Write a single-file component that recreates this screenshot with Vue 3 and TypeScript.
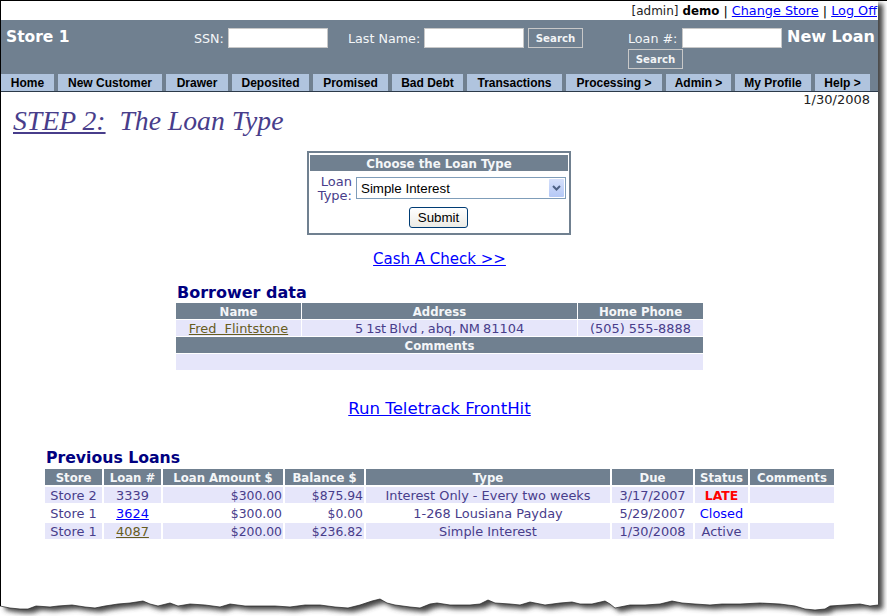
<script setup lang="ts">
const tabs = [
  { label: 'Home', width: 53 },
  { label: 'New Customer', width: 104 },
  { label: 'Drawer', width: 62 },
  { label: 'Deposited', width: 77 },
  { label: 'Promised', width: 75 },
  { label: 'Bad Debt', width: 71 },
  { label: 'Transactions', width: 95 },
  { label: 'Processing >', width: 96 },
  { label: 'Admin >', width: 65 },
  { label: 'My Profile', width: 76 },
  { label: 'Help >', width: 55 },
]

// torn bottom edge of the screenshot paper
const torn = '0,606 10,608 20,609 28,609 36,606 50,607 58,606 72,605 85,607 95,608 105,606 118,604 130,603 143,601 150,604 158,606 170,603 178,606 190,604 205,605 220,607 230,604 245,606 260,606 275,606 290,607 305,605 320,605 335,607 348,608 360,605 372,601 380,599 387,603 395,605 410,607 420,608 430,604 437,603 450,605 470,605 480,604 488,600 495,603 510,604 520,605 530,602 545,605 560,603 572,602 580,604 592,604 605,601 610,604 615,608 630,605 645,605 660,604 672,601 682,603 695,604 710,605 722,604 740,604 760,603 780,604 795,606 805,609 815,610 825,609 830,606 845,605 860,604 870,606 878,605'
const paper = `0,0 878,0 ${torn.split(' ').reverse().join(' ')}`

interface Loan {
  store: string
  no: string
  link?: 'new' | 'seen'
  amount: string
  balance: string
  type: string
  due: string
  status: string
  statusClass?: string
  odd: boolean
}

const loans: Loan[] = [
  { store: 'Store 2', no: '3339', amount: '$300.00', balance: '$875.94', type: 'Interest Only - Every two weeks', due: '3/17/2007', status: 'LATE', statusClass: 'late', odd: true },
  { store: 'Store 1', no: '3624', link: 'new', amount: '$300.00', balance: '$0.00', type: '1-268 Lousiana Payday', due: '5/29/2007', status: 'Closed', statusClass: 'closed', odd: false },
  { store: 'Store 1', no: '4087', link: 'seen', amount: '$200.00', balance: '$236.82', type: 'Simple Interest', due: '1/30/2008', status: 'Active', odd: true },
]
</script>

<template>
  <div class="sheet">
    <svg class="paper" width="887" height="616" viewBox="0 0 887 616">
      <defs>
        <filter id="soft" x="-5%" y="-5%" width="110%" height="110%">
          <feGaussianBlur stdDeviation="2.6" />
        </filter>
      </defs>
      <polygon :points="paper" fill="#444" filter="url(#soft)" transform="translate(5 4)" />
      <polygon :points="paper" fill="#fff" />
      <polyline :points="torn" fill="none" stroke="#222" stroke-width="0.7" />
      <path d="M0 .5H887M.5 0V606" fill="none" stroke="#000" />
    </svg>

    <div class="page">
      <div class="userbar">
        <span class="who">[admin]</span> <b>demo</b> | <a href="#">Change Store</a> | <a href="#">Log Off</a>
      </div>

      <header class="topbar">
        <div class="search-row">
          <strong class="store">Store 1</strong>
          <label class="ssn">SSN: <input type="text" /></label>
          <label class="lastname">Last Name: <input type="text" /></label>
          <button class="search-btn">Search</button>
          <div class="loan-search">
            <label>Loan #: <input type="text" /></label>
            <button class="search-btn">Search</button>
          </div>
          <strong class="newloan">New Loan</strong>
        </div>
        <nav class="tabs">
          <a v-for="t in tabs" :key="t.label" href="#" :style="{ width: t.width + 'px' }">{{ t.label }}</a>
        </nav>
      </header>

      <div class="today">1/30/2008</div>
      <h1 class="step"><u>STEP 2:</u>&nbsp; The Loan Type</h1>

      <form class="typebox" @submit.prevent>
        <div class="typebox-head">Choose the Loan Type</div>
        <div class="typebox-row">
          <label for="ltype">Loan Type:</label>
          <div class="fakeselect" id="ltype">
            <span>Simple Interest</span>
            <i class="arrow">
              <svg width="9" height="6" viewBox="0 0 9 6"><path d="M1 1l3.500 3.500L8 1" fill="none" stroke="#4d6185" stroke-width="2" /></svg>
            </i>
          </div>
        </div>
        <button class="submit">Submit</button>
      </form>

      <p class="biglink cash"><a href="#">Cash A Check &gt;&gt;</a></p>

      <table class="borrower">
        <caption>Borrower data</caption>
        <colgroup><col class="b1" /><col class="b2" /><col class="b3" /></colgroup>
        <tbody>
          <tr><th>Name</th><th>Address</th><th>Home Phone</th></tr>
          <tr class="alt">
            <td><a class="seen" href="#">Fred&nbsp; Flintstone</a></td>
            <td class="addr">5 1st Blvd , abq, NM 81104</td>
            <td>(505) 555-8888</td>
          </tr>
          <tr><th colspan="3">Comments</th></tr>
          <tr class="alt"><td colspan="3">&nbsp;</td></tr>
        </tbody>
      </table>

      <p class="biglink run"><a href="#">Run Teletrack FrontHit</a></p>

      <table class="loans">
        <caption>Previous Loans</caption>
        <colgroup>
          <col class="c1" /><col class="c2" /><col class="c3" /><col class="c4" />
          <col class="c5" /><col class="c6" /><col class="c7" /><col class="c8" />
        </colgroup>
        <thead>
          <tr>
            <th>Store</th><th>Loan #</th><th>Loan Amount $</th><th>Balance $</th>
            <th>Type</th><th>Due</th><th>Status</th><th>Comments</th>
          </tr>
        </thead>
        <tbody>
          <tr v-for="l in loans" :key="l.no" :class="{ alt: l.odd }">
            <td>{{ l.store }}</td>
            <td>
              <a v-if="l.link" href="#" :class="{ seen: l.link === 'seen' }">{{ l.no }}</a>
              <template v-else>{{ l.no }}</template>
            </td>
            <td class="num">{{ l.amount }}</td>
            <td class="num">{{ l.balance }}</td>
            <td>{{ l.type }}</td>
            <td>{{ l.due }}</td>
            <td :class="l.statusClass">{{ l.status }}</td>
            <td></td>
          </tr>
        </tbody>
      </table>
    </div>
  </div>
</template>

<style>
html, body { margin: 0; background: #fff; }
</style>

<style scoped>
.sheet {
  position: relative; width: 887px; height: 616px; overflow: hidden;
  font-family: "DejaVu Sans", Verdana, sans-serif; font-size: 13px; color: #483d8b;
}
.paper { position: absolute; left: 0; top: 0; }
.page { position: relative; width: 877px; margin-left: 1px; padding-top: 1px; }
a { color: #00f; }
a.seen { color: #665c1e; }

.userbar { height: 19px; line-height: 20px; text-align: right; color: #000; font-size: 12.800px; padding-right: 1px; white-space: nowrap; }
.userbar .who { color: #222; font-size: 12px; }
.userbar b { font-size: 11.800px; }

.topbar { background: #708090; height: 71px; display: flex; flex-direction: column; justify-content: space-between; border-bottom: 1px solid #2c3a4a; color: #fff; }
.search-row { display: flex; align-items: flex-start; padding: 8px 0 0 5px; height: 46px; box-sizing: border-box; }
.store, .newloan { font-size: 16px; line-height: 16px; margin-top: 1px; }
.store { width: 188px; font-size: 15.500px; }
.search-row label { white-space: nowrap; font-size: 12.700px; line-height: 22px; color: #f4f6f8; }
.search-row input {
  width: 100px; height: 20px; box-sizing: border-box; margin: 0; padding: 0;
  border: 1px solid #c8c8c8; background: #fff; vertical-align: top;
}
.ssn { width: 154px; }
.lastname { width: 180px; }
.search-btn {
  width: 55px; height: 20px; padding: 0; box-sizing: border-box;
  background: #708090; color: #f2f4f6; border: 1px solid #c8c8c8;
  font: bold 10.200px "DejaVu Sans", Verdana, sans-serif;
}
.lastname + .search-btn { margin-right: 45px; }
.loan-search { width: 159px; display: flex; flex-direction: column; align-items: flex-start; gap: 0; }
.loan-search label { height: 21px; }
.loan-search input { margin-left: 1px; }
.newloan { white-space: nowrap; }

.tabs { display: flex; gap: 4px; height: 17px; }
.tabs a {
  background: #b0c4de; color: #000; text-decoration: none; text-align: center; height: 17px;
  font: bold 12px/18px "Liberation Sans", Arial, sans-serif; white-space: nowrap;
}

.today { text-align: right; padding-right: 8px; font-size: 13px; line-height: 16px; color: #222; }
.step { margin: 0 0 0 12px; font: italic 27.700px/26px "Liberation Serif", "Times New Roman", serif; height: 43px; }

.typebox { width: 264px; height: 84px; box-sizing: border-box; margin: 0 0 0 306px; border: 2px solid #708090; padding: 2px 1px; text-align: center; }
.typebox-head { background: #708090; color: #f4f6f8; font-weight: bold; font-size: 11.800px; line-height: 14px; padding-top: 2px; }
.typebox-row { display: flex; align-items: flex-start; gap: 4px; margin-top: 6px; }
.typebox-row label { width: 42px; text-align: right; line-height: 14px; font-size: 13px; margin-top: -2px; }
.fakeselect {
  width: 210px; height: 22px; box-sizing: border-box; border: 1px solid #7f9db9; background: #fff;
  display: flex; align-items: center; justify-content: space-between; padding: 1px;
  font: 13.333px "Liberation Sans", Arial, sans-serif; color: #000;
}
.fakeselect span { padding-left: 3px; }
.arrow { width: 15px; height: 18px; display: flex; align-items: center; justify-content: center; background: linear-gradient(#d5e0fb, #b4c8f6); border-radius: 1px; }
.submit {
  display: block; margin: 4px 0 0 99px; width: 59px; height: 21px; padding: 0; box-sizing: border-box;
  background: linear-gradient(#fff, #ecebe5); border: 1px solid #003c74; border-radius: 3px;
  font: 13.333px "Liberation Sans", Arial, sans-serif; color: #000;
}

.biglink { margin: 0; text-align: center; font-size: 15px; line-height: 18px; }
.cash { margin-top: 15px; height: 34px; }
.run { margin-top: 29px; height: 49px; font-size: 16.600px; }

table { border-collapse: separate; margin: 0 auto; table-layout: fixed; }
caption { text-align: left; font-weight: bold; font-size: 16px; line-height: 18px; color: #000080; }
th { background: #708090; color: #f4f6f8; font-size: 11.700px; font-weight: bold; line-height: 14px; padding: 2px 0 0; }
td { font-size: 12.900px; line-height: 15px; padding: 1px 0 0; text-align: center; height: 15px; }
tr.alt td { background: #e6e6fa; }

.borrower { width: 529px; border-spacing: 1px; }
.borrower caption { padding-left: 2px; }
.b1 { width: 125px; }
.b2 { width: 275px; }
.b3 { width: 125px; }
td.addr { word-spacing: -1px; }

.loans { width: 793px; border-spacing: 2px; }
.loans caption { padding-left: 3px; font-size: 15.700px; }
.c1, .c2 { width: 57px; }
.c3 { width: 120px; }
.c4 { width: 79px; }
.c5 { width: 244px; }
.c6 { width: 81px; }
.c7 { width: 53px; }
.c8 { width: 84px; }
td.num { text-align: right; padding-right: 1px; font-size: 12.400px; }
td.late { color: #f00; font-weight: bold; font-size: 12.400px; }
td.closed { color: #00f; }
</style>
